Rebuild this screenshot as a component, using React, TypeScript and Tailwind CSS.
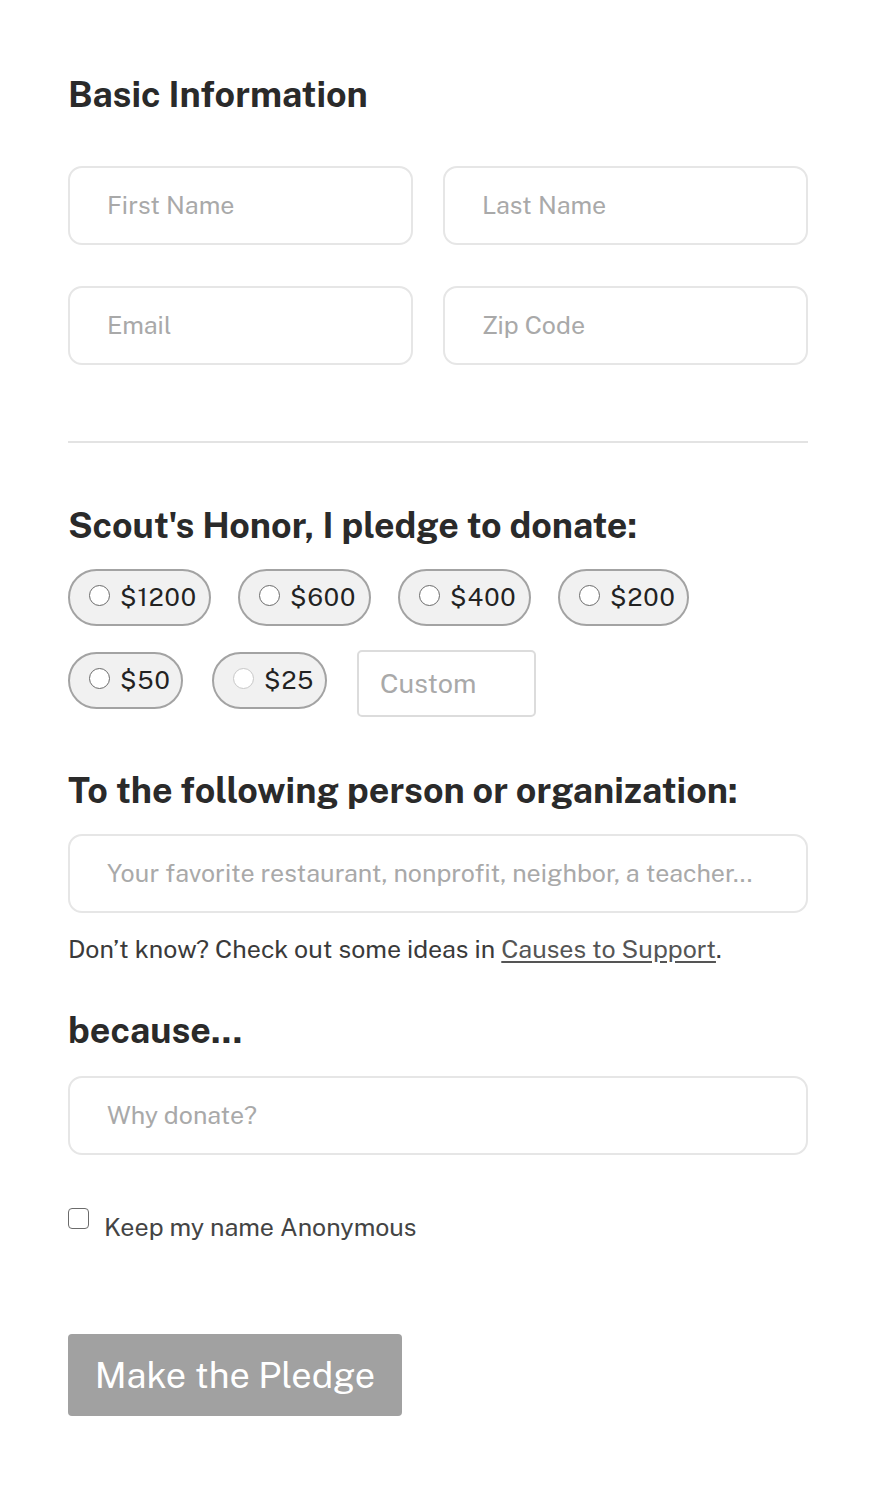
import React from "react";

const font = { fontFamily: "'Public Sans', Inter, 'Noto Sans', sans-serif" };

function Field({ placeholder, className = "" }: { placeholder: string; className?: string }) {
  return (
    <div className={`h-[79px] rounded-[14px] border-2 border-[#e6e6e6] bg-white flex items-center px-[37px] ${className}`}>
      <span className="text-[25px] text-[#a9a9a9]">{placeholder}</span>
    </div>
  );
}

function Pill({ label, faded = false, w }: { label: string; faded?: boolean; w: string }) {
  return (
    <div className={`h-[57px] ${w} rounded-full border-2 border-[#a3a3a3] bg-[#f1f1f1] flex items-center pl-[19px]`}>
      <span
        className={`w-[21px] h-[21px] rounded-full border-[1.5px] ${faded ? "border-[#c8c8c8]" : "border-[#6b6b6b]"} bg-white mr-[10px] -mt-[4px]`}
      />
      <span className="text-[25px] tracking-[1px] text-[#222]">{label}</span>
    </div>
  );
}

const h = "text-[35.8px] font-bold text-[#2a2a2a] leading-[48px]";

export default function App() {
  return (
    <div className="min-h-[1512px] w-[878px] bg-white" style={font}>
      <div className="pl-[68px] pr-[70px] pt-[70px]">
        <h2 className={h}>Basic Information</h2>
        <div className="mt-[48px] grid grid-cols-[345px_365px] gap-x-[30px] gap-y-[41px]">
          <Field placeholder="First Name" />
          <Field placeholder="Last Name" />
          <Field placeholder="Email" />
          <Field placeholder="Zip Code" />
        </div>
        <div className="mt-[76px] h-[2px] bg-[#e3e3e3]" />
        <h2 className={`mt-[58px] ${h}`}>Scout's Honor, I pledge to donate:</h2>
        <div className="mt-[20px] flex gap-[27px]">
          <Pill label="$1200" w="w-[143px]" />
          <Pill label="$600" w="w-[133px]" />
          <Pill label="$400" w="w-[133px]" />
          <Pill label="$200" w="w-[131px]" />
        </div>
        <div className="mt-[24px] flex items-start">
          <div className="mt-[2px]">
            <Pill label="$50" w="w-[115px]" />
          </div>
          <div className="ml-[29px] mt-[2px]">
            <Pill label="$25" faded w="w-[115px]" />
          </div>
          <div className="ml-[30px] h-[67px] w-[179px] rounded-[5px] border-2 border-[#dcdcdc] flex items-center pl-[21px]">
            <span className="text-[27px] text-[#a9a9a9]">Custom</span>
          </div>
        </div>
        <h2 className={`mt-[49px] ${h}`}>To the following person or organization:</h2>
        <Field placeholder="Your favorite restaurant, nonprofit, neighbor, a teacher..." className="mt-[20px]" />
        <p className="mt-[20px] text-[25px] text-[#3a3a3a] leading-[32px]">
          Don’t know? Check out some ideas in <span className="underline underline-offset-[3px] text-[#555]">Causes to Support</span>.
        </p>
        <h2 className={`mt-[41px] ${h}`}>because...</h2>
        <Field placeholder="Why donate?" className="mt-[22px]" />
        <div className="mt-[53px] flex items-start">
          <span className="w-[21px] h-[21px] rounded-[4px] border-[1.5px] border-[#6b6b6b] bg-white" />
          <span className="ml-[15px] mt-[3px] text-[25px] text-[#444] leading-[32px]">Keep my name Anonymous</span>
        </div>
        <div className="mt-[91px] w-[334px] h-[82px] rounded-[4px] bg-[#a1a1a1] flex items-center justify-center">
          <span className="text-[36px] text-white">Make the Pledge</span>
        </div>
      </div>
    </div>
  );
}
